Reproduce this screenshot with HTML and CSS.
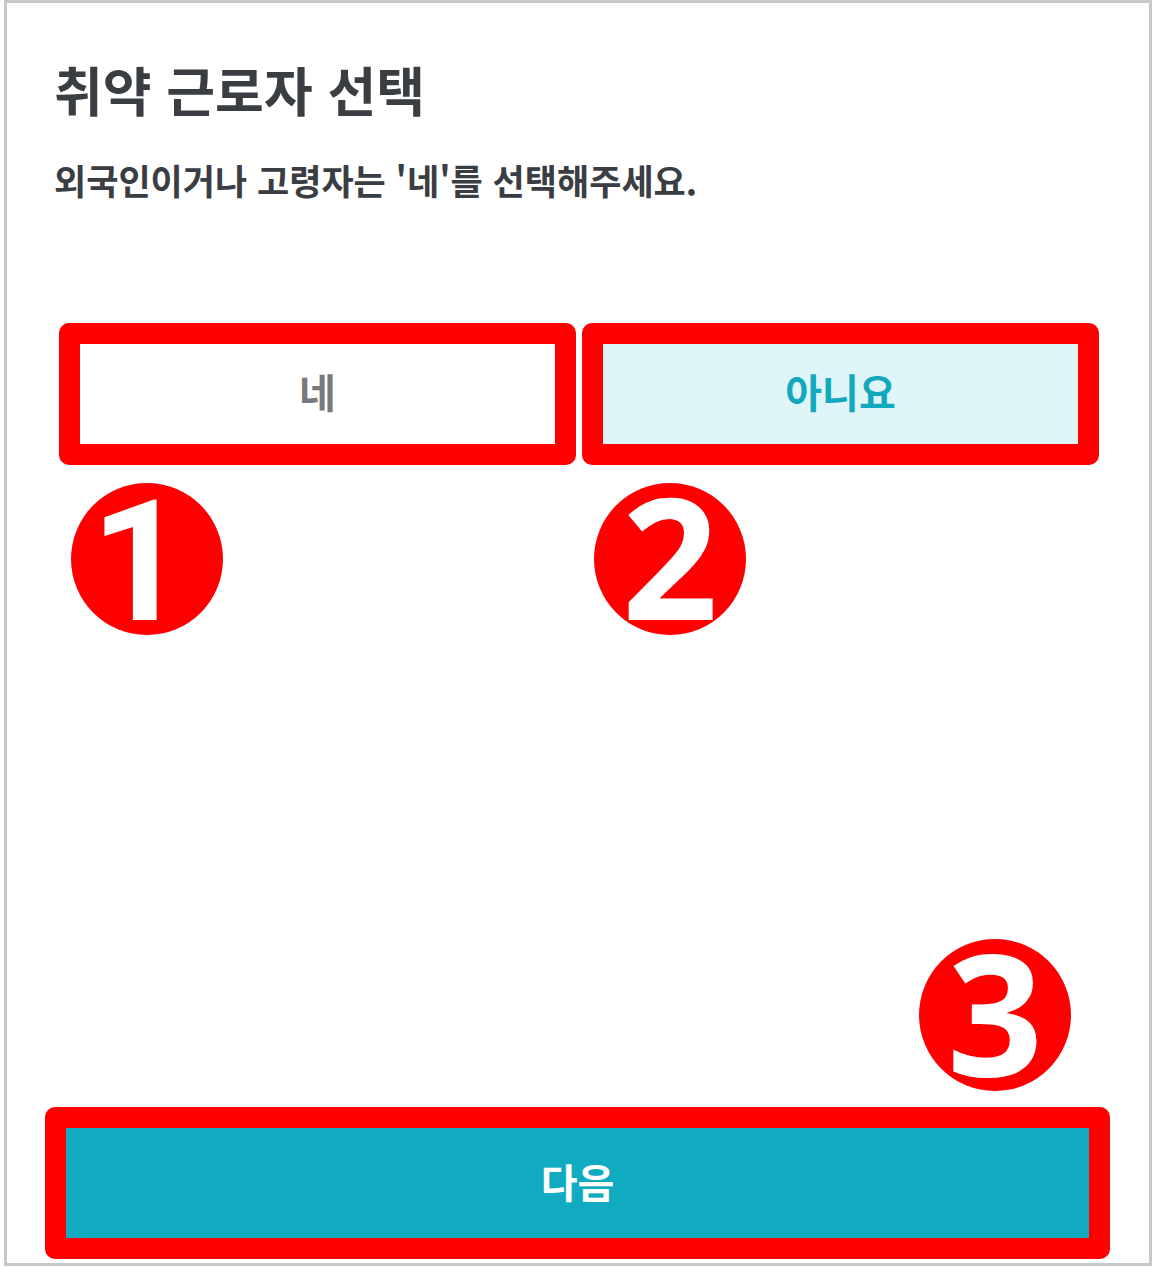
FILE: index.html
```html
<!DOCTYPE html>
<html lang="ko">
<head>
<meta charset="utf-8">
<title>취약 근로자 선택</title>
<link rel="stylesheet" href="styles.css">
</head>
<body>
<div class="screen">
  <header class="head">
    <h1 class="title">취약 근로자 선택</h1>
    <p class="desc">외국인이거나 고령자는 '네'를 선택해주세요.</p>
  </header>

  <div class="options">
    <div class="col">
      <div class="mark">
        <button class="opt opt-yes" type="button">네</button>
      </div>
      <svg class="num" viewBox="0 0 152 152" width="152" height="152">
        <circle cx="76" cy="76" r="76" fill="#ff0000"/>
        <text class="one" x="68" y="137" text-anchor="middle">1</text>
      </svg>
    </div>
    <div class="col">
      <div class="mark">
        <button class="opt opt-no" type="button">아니요</button>
      </div>
      <svg class="num" viewBox="0 0 152 152" width="152" height="152">
        <circle cx="76" cy="76" r="76" fill="#ff0000"/>
        <text x="76" y="137" text-anchor="middle">2</text>
      </svg>
    </div>
  </div>

  <div class="spacer"></div>

  <footer class="foot">
    <svg class="num num-end" viewBox="0 0 152 152" width="152" height="152">
      <circle cx="76" cy="76" r="76" fill="#ff0000"/>
      <text x="76" y="137" text-anchor="middle">3</text>
    </svg>
    <div class="mark">
      <button class="next" type="button">다음</button>
    </div>
  </footer>
</div>
</body>
</html>
```

FILE: styles.css
```css
* {
  box-sizing: border-box;
}

html, body {
  margin: 0;
  padding: 0;
  background: #ffffff;
}

body {
  font-family: "Noto Sans CJK KR", "Noto Sans", sans-serif;
}

.screen {
  width: 1148px;
  height: 1266px;
  margin-left: 4px;
  border: 3px solid #c8c8c8;
  display: flex;
  flex-direction: column;
  overflow: hidden;
}

.head {
  padding: 54px 0 0 47px;
}

.title {
  margin: 0;
  font-size: 53px;
  line-height: 64px;
  font-weight: 700;
  color: #3a3d41;
}

.desc {
  margin: 37px 0 0;
  font-size: 35px;
  line-height: 44px;
  font-weight: 700;
  color: #3a3d41;
}

.options {
  display: flex;
  gap: 6px;
  margin: 121px 0 0 52px;
}

.col {
  display: flex;
  flex-direction: column;
  width: 517px;
}

.mark {
  border: 21px solid #ff0000;
  border-radius: 10px;
}

.opt {
  display: block;
  width: 100%;
  height: 100px;
  border: 0;
  margin: 0;
  padding: 0 0 6px;
  font-family: inherit;
  font-size: 40px;
  font-weight: 700;
}

.opt-yes {
  background: #ffffff;
  color: #77797c;
}

.opt-no {
  background: #e0f5f8;
  color: #12a9bf;
}

.num {
  display: block;
  overflow: visible;
  margin: 18px 0 0 12px;
}

.num text {
  font-family: "Open Sans", sans-serif;
  font-weight: 700;
  font-size: 168px;
  fill: #ffffff;
}

.num text.one {
  font-family: Roboto, sans-serif;
  font-weight: 700;
}

.spacer {
  flex: 1;
}

.foot {
  display: flex;
  flex-direction: column;
  padding: 0 39px 4px 38px;
}

.num-end {
  align-self: flex-end;
  margin: 0 39px 16px 0;
}

.next {
  display: block;
  width: 100%;
  height: 110px;
  border: 0;
  margin: 0;
  padding: 0 0 4px;
  background: #11abc1;
  color: #ffffff;
  font-family: inherit;
  font-size: 40px;
  font-weight: 700;
}
```
